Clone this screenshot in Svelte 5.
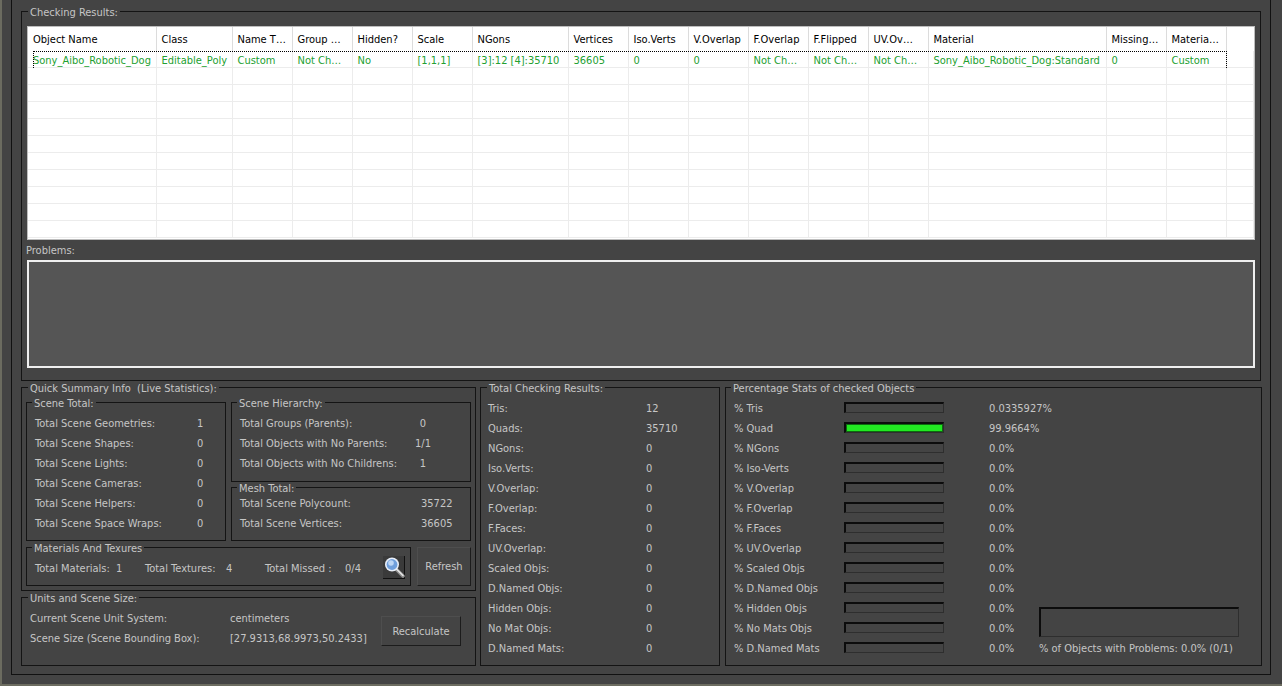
<script>
  const headers = ['Object Name','Class','Name T…','Group …','Hidden?','Scale','NGons','Vertices','Iso.Verts','V.Overlap','F.Overlap','F.Flipped','UV.Ov…','Material','Missing…','Materia…',''];
  const first = ['Sony_Aibo_Robotic_Dog','Editable_Poly','Custom','Not Ch…','No','[1,1,1]','[3]:12 [4]:35710','36605','0','0','Not Ch…','Not Ch…','Not Ch…','Sony_Aibo_Robotic_Dog:Standard','0','Custom',''];
  const blank = Array(17).fill('');
  const emptyRows = Array(10).fill(blank);
  const sceneTotal = [['Total Scene Geometries:','1'],['Total Scene Shapes:','0'],['Total Scene Lights:','0'],['Total Scene Cameras:','0'],['Total Scene Helpers:','0'],['Total Scene Space Wraps:','0']];
  const hierarchy = [['Total Groups (Parents):','0'],['Total Objects with No Parents:','1/1'],['Total Objects with No Childrens:','1']];
  const mesh = [['Total Scene Polycount:','35722'],['Total Scene Vertices:','36605']];
  const totals = [['Tris:','12'],['Quads:','35710'],['NGons:','0'],['Iso.Verts:','0'],['V.Overlap:','0'],['F.Overlap:','0'],['F.Faces:','0'],['UV.Overlap:','0'],['Scaled Objs:','0'],['D.Named Objs:','0'],['Hidden Objs:','0'],['No Mat Objs:','0'],['D.Named Mats:','0']];
  const stats = [['% Tris',0,'0.0335927%'],['% Quad',100,'99.9664%'],['% NGons',0,'0.0%'],['% Iso-Verts',0,'0.0%'],['% V.Overlap',0,'0.0%'],['% F.Overlap',0,'0.0%'],['% F.Faces',0,'0.0%'],['% UV.Overlap',0,'0.0%'],['% Scaled Objs',0,'0.0%'],['% D.Named Objs',0,'0.0%'],['% Hidden Objs',0,'0.0%'],['% No Mats Objs',0,'0.0%'],['% D.Named Mats',0,'0.0%']];
</script>

<div class="app">
  <div class="frame">
    <section class="group results">
      <span class="legend">Checking Results:</span>
      <div class="table">
        <div class="row head">
          {#each headers as h}<div class="cell">{h}</div>{/each}
        </div>
        <div class="row body focused">
          {#each first as c}<div class="cell">{c}</div>{/each}
        </div>
        {#each emptyRows as r}
          <div class="row body">
            {#each r as c}<div class="cell">{c}</div>{/each}
          </div>
        {/each}
      </div>
      <div class="problems-label">Problems:</div>
      <div class="problems"></div>
    </section>

    <div class="lower">
      <div class="left-col">
        <section class="group quick">
          <span class="legend">Quick Summary Info  (Live Statistics):</span>
          <div class="quick-top">
            <section class="group scene-total">
              <span class="legend">Scene Total:</span>
              {#each sceneTotal as [k, v]}
                <div class="kv"><span>{k}</span><span>{v}</span></div>
              {/each}
            </section>
            <div class="quick-right">
              <section class="group hierarchy">
                <span class="legend">Scene Hierarchy:</span>
                {#each hierarchy as [k, v]}
                  <div class="kv"><span>{k}</span><span class="centered">{v}</span></div>
                {/each}
              </section>
              <section class="group mesh">
                <span class="legend">Mesh Total:</span>
                {#each mesh as [k, v]}
                  <div class="kv"><span>{k}</span><span>{v}</span></div>
                {/each}
              </section>
            </div>
          </div>
          <div class="quick-bottom">
            <section class="group materials">
              <span class="legend">Materials And Texures</span>
              <span>Total Materials:</span><span>1</span>
              <span>Total Textures:</span><span>4</span>
              <span>Total Missed :</span><span>0/4</span>
              <button class="icon-btn" aria-label="Find">
                <svg width="22" height="22" viewBox="0 0 22 22">
                  <path d="M13 13 L20 20" stroke="#8c8c8c" stroke-width="3.6" stroke-linecap="round"/>
                  <path d="M13.5 13 L20 19.5" stroke="#e6e6e6" stroke-width="1.5" stroke-linecap="round"/>
                  <circle cx="9" cy="8.5" r="7" fill="#e8eef8"/>
                  <circle cx="9" cy="8.5" r="5.4" fill="#6f9fdc"/>
                  <circle cx="8" cy="7" r="2.8" fill="#bcd6f5"/>
                </svg>
              </button>
            </section>
            <button class="btn refresh">Refresh</button>
          </div>
        </section>
        <section class="group units">
          <span class="legend">Units and Scene Size:</span>
          <div class="unit-rows">
            <div class="kv"><span>Current Scene Unit System:</span><span>centimeters</span></div>
            <div class="kv"><span>Scene Size (Scene Bounding Box):</span><span>[27.9313,68.9973,50.2433]</span></div>
          </div>
          <button class="btn recalc">Recalculate</button>
        </section>
      </div>

      <section class="group checking">
        <span class="legend">Total Checking Results:</span>
        {#each totals as [k, v]}
          <div class="kv"><span>{k}</span><span>{v}</span></div>
        {/each}
      </section>

      <section class="group percent">
        <span class="legend">Percentage Stats of checked Objects</span>
        <div class="stat-list">
          {#each stats as [k, p, v]}
            <div class="stat">
              <span>{k}</span>
              <div class="bar"><div class="fill" style:width="{p}%"></div></div>
              <span>{v}</span>
            </div>
          {/each}
        </div>
        <div class="summary">
          <div class="bar big"></div>
          <div class="summary-text">% of Objects with Problems: 0.0% (0/1)</div>
        </div>
      </section>
    </div>
  </div>
</div>

<style>
  :global(body) { margin: 0; background: #444; }
  .app {
    box-sizing: border-box; width: 1282px; height: 686px; overflow: hidden;
    background: #444; color: #c6c6c6;
    border-left: 2px solid #6c6c60; border-bottom: 2px solid #6c6c60;
    padding: 0 11px 9px 9px;
    font: 11px/20px "DejaVu Sans Condensed", "DejaVu Sans", sans-serif;
    font-stretch: condensed;
  }
  .frame {
    box-sizing: border-box; height: 100%;
    border: 1px solid #111; border-top: none;
    padding: 11px 8px 9px 9px;
  }
  .group { box-sizing: border-box; position: relative; border: 1px solid #141414; }
  .legend {
    position: absolute; top: -6px; left: 6px; padding: 0 2px;
    background: #444; line-height: 14px; white-space: pre; color: #c6c6c6;
  }
  .group .group .legend { left: 5px; }

  .results { height: 370px; width: 1240px; padding: 14px 5px 0; }
  .table {
    box-sizing: border-box; width: 1228px; height: 214px;
    background: #fff; border: 1px solid #bdbdbd; overflow: hidden; color: #000;
  }
  .row {
    display: grid; position: relative;
    grid-template-columns: 129px 76px 60px 60px 60px 60px 96px 60px 60px 60px 60px 60px 60px 178px 60px 60px 1fr;
  }
  .cell { padding-left: 4.5px; overflow: hidden; white-space: nowrap; border-right: 1px solid #ececec; box-sizing: border-box; }
  .cell:first-child { padding-left: 5px; }
  .head { height: 24px; }
  .head .cell { line-height: 26px; border-right-color: #dcdcdc; margin-left: -1px; padding-left: 5.5px; }
  .head .cell:first-child { margin-left: 0; padding-left: 5px; }
  .head .cell:last-child { border-right: none; }
  .body { height: 17px; border-bottom: 1px solid #ececec; box-sizing: border-box; }
  .body .cell { padding-top: 2px; line-height: 15px; color: #22a030; }
  .focused::after {
    content: ""; position: absolute; left: 5px; top: 0; width: 1192px; height: 16px;
    border: 1px dotted #000; border-bottom: none;
  }
  .problems-label { line-height: 14px; margin: 4px 0 2px -1px; }
  .problems {
    box-sizing: border-box; width: 1228px; height: 108px;
    background: #555; border: 2px solid #efefef;
  }

  .lower { display: grid; grid-template-columns: 455px 241px 537px; gap: 0 3px; margin-top: 6px; height: 279px; }
  .left-col { display: flex; flex-direction: column; gap: 6px; }
  .quick { height: 204px; padding: 14px 4px 0; }
  .quick-top { display: flex; gap: 5px; }
  .scene-total { width: 200px; height: 139px; padding: 11px 0 0 8px; }
  .kv { display: grid; height: 20px; white-space: nowrap; }
  .scene-total .kv { grid-template-columns: 162px auto; }
  .quick-right { display: flex; flex-direction: column; gap: 5px; width: 240px; }
  .hierarchy { height: 80px; padding: 11px 0 0 8px; }
  .hierarchy .kv { grid-template-columns: 165px 36px; }
  .centered { text-align: center; }
  .mesh { height: 54px; padding: 6px 0 0 8px; }
  .mesh .kv { grid-template-columns: 181px auto; }
  .quick-bottom { display: flex; gap: 6px; margin-top: 6px; }
  .materials {
    width: 385px; height: 39px; padding: 11px 0 0 8px;
    display: grid; grid-template-columns: 81px 29px 81px 39px 80px 38px 22px; align-items: start;
  }
  .icon-btn {
    width: 22px; height: 23px; padding: 0; margin: -3px 0 0; background: #3a3a3a;
    border: none; border-right: 1px solid #111; border-bottom: 1px solid #111; display: block;
  }
  .icon-btn svg { display: block; }
  .btn {
    box-sizing: border-box; background: #444; color: #c6c6c6; font: inherit; font-stretch: inherit;
    border: 1px solid #3a3a3a; border-top-color: #4e4e4e; border-left-color: #4e4e4e;
    border-right-color: #1c1c1c; border-bottom-color: #1c1c1c; padding: 0;
  }
  .refresh { width: 54px; height: 39px; }
  .units { height: 69px; padding: 11px 0 0 8px; display: flex; }
  .unit-rows { width: 351px; }
  .unit-rows .kv { grid-template-columns: 200px auto; }
  .recalc { width: 80px; height: 30px; margin-top: 7px; padding-top: 2px; }

  .checking { margin-left: 1px; width: 240px; padding: 11px 0 0 7px; }
  .checking .kv { grid-template-columns: 158px auto; }
  .percent { margin-left: 2px; width: 537px; padding: 10px 0 0 8px; display: flex; }
  .percent > .legend { left: 5px; }
  .stat-list { width: 305px; }
  .stat { display: grid; grid-template-columns: 110px 100px auto; height: 20px; align-items: start; }
  .stat > span { padding-top: 1px; }
  .stat > span:last-child { margin-left: 45px; white-space: nowrap; }
  .stat > .bar { margin-top: 4px; }
  .bar {
    box-sizing: border-box; height: 11px; width: 100px;
    border: 1px solid #2e2e2e; border-top: 2px solid #0c0c0c; border-left: 2px solid #0c0c0c;
  }
  .fill { height: 100%; background: #22e822; outline: 1px solid #0e6a10; outline-offset: -1px; }
  .summary { display: flex; flex-direction: column; justify-content: flex-end; height: 261px; }
  .big { width: 200px; height: 30px; margin-bottom: 1px; }
  .summary-text { height: 20px; padding-top: 1px; white-space: nowrap; }
</style>
